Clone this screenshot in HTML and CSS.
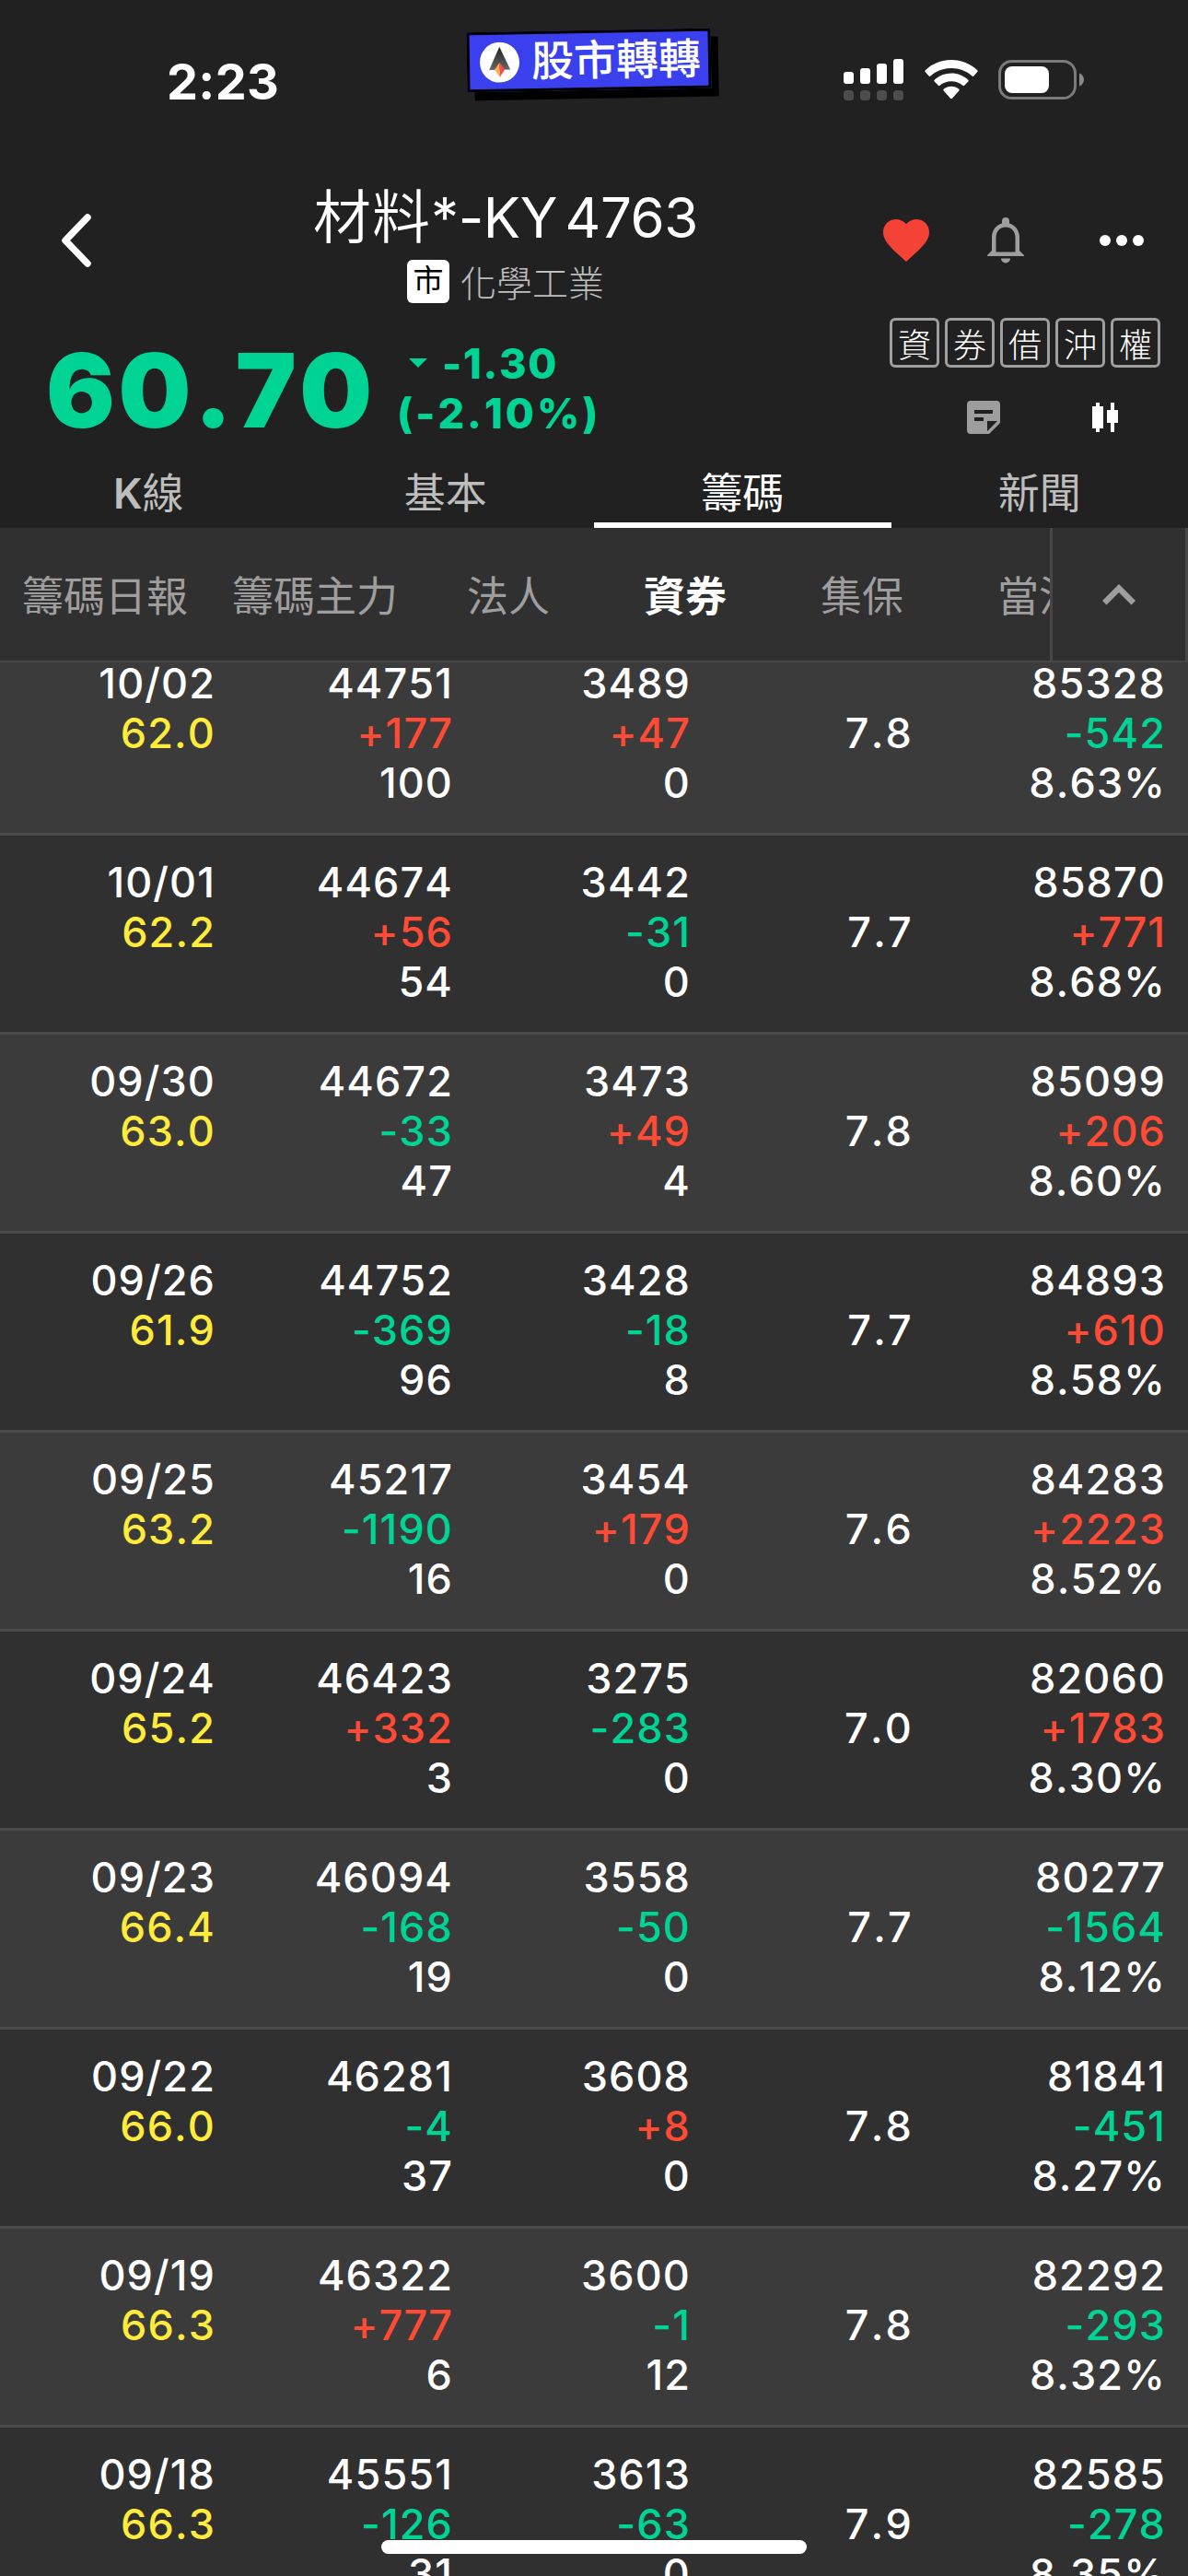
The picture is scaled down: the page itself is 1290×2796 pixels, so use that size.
FILE: index.html
```
<!DOCTYPE html>
<html lang="zh-Hant">
<head>
    <meta charset="UTF-8">
    <meta name="viewport" content="width=device-width, initial-scale=1.0">
    <title>材料*-KY 4763</title>
    <link rel="stylesheet" href="styles.css">
</head>
<body>
    <div class="screen">
        <div class="status-bar">
            <span class="clock">2:23</span>
            <div class="status-icons">
                <svg width="66" height="46" viewBox="0 0 66 46" fill="#fff">
                    <rect x="0" y="15" width="11" height="13" rx="3"/>
                    <rect x="18" y="11" width="11" height="17" rx="3"/>
                    <rect x="36" y="6" width="11" height="22" rx="3"/>
                    <rect x="54" y="1" width="11" height="27" rx="3"/>
                    <g fill="#4d4d4d">
                        <rect x="0" y="35" width="11" height="11" rx="3.5"/>
                        <rect x="18" y="35" width="11" height="11" rx="3.5"/>
                        <rect x="36" y="35" width="11" height="11" rx="3.5"/>
                        <rect x="54" y="35" width="11" height="11" rx="3.5"/>
                    </g>
                </svg>
                <svg class="wifi" width="58" height="43" viewBox="0 0 58 43" fill="#fff">
                    <path d="M29 0C18 0 8 4.300 .7 11.300Q0 12.200 .7 13.100L4.600 17.500Q5.600 18.300 6.500 17.500C12.500 12 20.300 9 29 9S45.500 12 51.500 17.500Q52.400 18.300 53.400 17.500L57.300 13.100Q58 12.200 57.300 11.300C50 4.300 40 0 29 0Z"/>
                    <path d="M29 14.500C22 14.500 15.500 17.200 10.700 21.700Q9.900 22.600 10.700 23.500L14.800 27.800Q15.700 28.600 16.700 27.800C20 24.800 24.300 23.200 29 23.200S38 24.800 41.300 27.800Q42.300 28.600 43.200 27.800L47.300 23.500Q48.100 22.600 47.300 21.700C42.500 17.200 36 14.500 29 14.500Z"/>
                    <path d="M29 28.700C25.800 28.700 22.900 29.900 20.700 31.700Q19.800 32.600 20.700 33.600L28 41.700Q29 42.600 30 41.700L37.300 33.600Q38.200 32.600 37.300 31.700C35.100 29.900 32.200 28.700 29 28.700Z"/>
                </svg>
                <svg width="94" height="43" viewBox="0 0 94 43">
                    <rect x="1.500" y="1.500" width="82" height="40" rx="13" fill="none" stroke="#7b7b7b" stroke-width="3"/>
                    <rect x="7" y="7" width="48" height="29" rx="8" fill="#fff"/>
                    <path d="M88 14.500C91 15.500 93 18.300 93 21.500S91 27.500 88 28.500Z" fill="#8a8a8a"/>
                </svg>
            </div>
            <div class="app-badge">
                <svg width="43" height="44" viewBox="0 0 43 44">
                    <defs>
                        <linearGradient id="arrow" x1="0" y1="0" x2="0" y2="1">
                            <stop offset="0" stop-color="#222"/>
                            <stop offset="1" stop-color="#666"/>
                        </linearGradient>
                    </defs>
                    <ellipse cx="21.500" cy="22" rx="21.500" ry="22" fill="#fff"/>
                    <path d="M21.500 5L33 30H10Z" fill="url(#arrow)"/>
                    <path d="M21.500 22V38L16 30Z" fill="#ffb04d"/>
                    <path d="M21.500 22V38L27 30Z" fill="#f94b4b"/>
                </svg>
                <span>股市轉轉</span>
            </div>
        </div>

        <div class="nav">
            <svg class="back" width="34" height="58" viewBox="0 0 34 58" fill="none" stroke="#fff" stroke-width="7.500" stroke-linecap="round" stroke-linejoin="round">
                <path d="M29 4L5 29L29 54"/>
            </svg>
            <div class="title">
                <h1><span>材料</span>*-KY 4763</h1>
                <div class="industry"><span class="market">市</span><span>化學工業</span></div>
            </div>
            <div class="actions">
                <svg width="50" height="46" viewBox="0 0 50 46" fill="#f44336">
                    <path d="M25 46L21.400 42.700C8.500 31.200 0 23.500 0 14C0 6.300 6 0 13.800 0C18.100 0 22.300 2 25 5.200C27.700 2 31.900 0 36.200 0C44 0 50 6.300 50 14C50 23.500 41.500 31.200 28.600 42.700Z"/>
                </svg>
                <svg width="40" height="50" viewBox="0 0 40 50" fill="#9e9e9e">
                    <path fill-rule="evenodd" d="M20 0A4 4 0 0 0 16 4V6.500C9 8.500 5 14.500 5 22V36L0 41V42H40V41L35 36V22C35 14.500 31 8.500 24 6.500V4A4 4 0 0 0 20 0ZM20 10.500C26.500 10.500 30.500 15.500 30.500 22V37.500H9.500V22C9.500 15.500 13.500 10.500 20 10.500Z"/>
                    <path d="M15 44.500H25A5 5 0 0 1 15 44.500Z"/>
                </svg>
                <svg width="48" height="12" viewBox="0 0 48 12" fill="#fff">
                    <circle cx="6" cy="6" r="6"/><circle cx="24" cy="6" r="6"/><circle cx="42" cy="6" r="6"/>
                </svg>
            </div>
        </div>

        <div class="quote">
            <div class="price">60.70</div>
            <div class="change">
                <div><svg width="20" height="10" viewBox="0 0 20 10"><path d="M0 0H20L10 10Z" fill="#00d494"/></svg>-1.30</div>
                <div class="percent">(-2.10%)</div>
            </div>
            <div class="quote-side">
                <div class="tags">
                    <span>資</span><span>券</span><span>借</span><span>沖</span><span>權</span>
                </div>
                <div class="tools">
                    <svg width="36" height="36" viewBox="0 0 36 36">
                        <path fill="#9e9e9e" fill-rule="evenodd" d="M4 0H32Q36 0 36 4V24L24 36H4Q0 36 0 32V4Q0 0 4 0ZM8 10V14H28V10ZM8 18V22H18V18ZM22 22V33L33 22Z"/>
                    </svg>
                    <svg width="28" height="32" viewBox="0 0 28 32" fill="#fff">
                        <path d="M4 0H8V4H12V28H8V32H4V28H0V4H4Z"/>
                        <path d="M20 0H24V8H28V22H24V32H20V22H16V8H20Z"/>
                    </svg>
                </div>
            </div>
        </div>

        <div class="tabs">
            <div class="tab"><b>K</b>線</div>
            <div class="tab">基本</div>
            <div class="tab active">籌碼</div>
            <div class="tab">新聞</div>
        </div>

        <div class="sub-tabs">
            <div class="sub-list">
                <div class="sub">籌碼日報</div>
                <div class="sub">籌碼主力</div>
                <div class="sub">法人</div>
                <div class="sub active">資券</div>
                <div class="sub">集保</div>
                <div class="sub">當沖</div>
            </div>
            <div class="collapse">
                <svg width="36" height="23" viewBox="0 0 36 23" fill="#9e9e9e">
                    <path d="M18 0L36 18L31.500 22.500L18 9L4.500 22.500L0 18Z"/>
                </svg>
            </div>
        </div>

        <div class="list">
            <div class="rows" id="rows"></div>
        </div>
        <div class="home-indicator"></div>
    </div>
    <script>
        // date, close, margin (balance, change, offset), short (balance, change, offset), ratio, total (balance, change, percent)
        const rows = [
            ['10/02', '62.0', '44751', '+177', '100', '3489', '+47', '0', '7.8', '85328', '-542', '8.63%'],
            ['10/01', '62.2', '44674', '+56', '54', '3442', '-31', '0', '7.7', '85870', '+771', '8.68%'],
            ['09/30', '63.0', '44672', '-33', '47', '3473', '+49', '4', '7.8', '85099', '+206', '8.60%'],
            ['09/26', '61.9', '44752', '-369', '96', '3428', '-18', '8', '7.7', '84893', '+610', '8.58%'],
            ['09/25', '63.2', '45217', '-1190', '16', '3454', '+179', '0', '7.6', '84283', '+2223', '8.52%'],
            ['09/24', '65.2', '46423', '+332', '3', '3275', '-283', '0', '7.0', '82060', '+1783', '8.30%'],
            ['09/23', '66.4', '46094', '-168', '19', '3558', '-50', '0', '7.7', '80277', '-1564', '8.12%'],
            ['09/22', '66.0', '46281', '-4', '37', '3608', '+8', '0', '7.8', '81841', '-451', '8.27%'],
            ['09/19', '66.3', '46322', '+777', '6', '3600', '-1', '12', '7.8', '82292', '-293', '8.32%'],
            ['09/18', '66.3', '45551', '-126', '31', '3613', '-63', '0', '7.9', '82585', '-278', '8.35%']
        ];

        function cell(top, change, bottom) {
            const cls = change[0] === '+' ? 'up' : 'down';
            return `<div class="cell"><div>${top}</div><div class="${cls}">${change}</div><div>${bottom}</div></div>`;
        }

        document.getElementById('rows').innerHTML = rows.map(r => `
            <div class="row">
                <div class="cell"><div>${r[0]}</div><div class="close">${r[1]}</div></div>
                ${cell(r[2], r[3], r[4])}
                ${cell(r[5], r[6], r[7])}
                <div class="cell ratio"><div>${r[8]}</div></div>
                ${cell(r[9], r[10], r[11])}
            </div>`).join('');
    </script>
</body>
</html>
```
FILE: styles.css
```
* {
    box-sizing: border-box;
}
body {
    margin: 0;
    background-color: #212121;
    color: #fff;
    font-family: Inter, "Noto Sans CJK TC", sans-serif;
}
svg {
    display: block;
    flex: none;
}
.screen {
    position: relative;
    width: 1290px;
    height: 2796px;
    display: flex;
    flex-direction: column;
    overflow: hidden;
}

/* status bar */
.status-bar {
    height: 177px;
    padding: 59px 112px 0 181px;
    display: flex;
    justify-content: space-between;
    align-items: flex-start;
}
.clock {
    font-size: 54px;
    font-weight: 700;
    line-height: 60px;
    letter-spacing: 0.3px;
}
.status-icons {
    display: flex;
    align-items: flex-start;
    padding-top: 4px;
}
.status-icons .wifi {
    margin: 2px 22px 0;
}
.status-icons svg:last-child {
    margin-top: 2px;
}
.app-badge {
    position: absolute;
    left: 507px;
    top: 33px;
    width: 265px;
    height: 65px;
    padding-left: 11px;
    display: flex;
    align-items: center;
    gap: 13px;
    background-color: #3b40ef;
    border: 3px solid #000;
    box-shadow: 8px 9px 0 #000;
    transform: rotate(-1deg);
    font-size: 46px;
    font-weight: 500;
    line-height: 59px;
}

/* title and actions */
.nav {
    height: 168px;
    display: flex;
    position: relative;
    justify-content: space-between;
    align-items: center;
    padding: 0 48px 0 66px;
}
.title {
    position: absolute;
    left: 0;
    right: 192px;
    top: 18px;
    display: flex;
    flex-direction: column;
    align-items: center;
}
.title h1 {
    margin: 0;
    font-size: 60px;
    font-weight: 400;
    line-height: 80px;
    letter-spacing: -0.4px;
    word-spacing: -8px;
}
.title h1 span {
    font-size: 63px;
    font-weight: 350;
    letter-spacing: 1px;
}
.industry {
    display: flex;
    align-items: center;
    gap: 12px;
    height: 58px;
    color: #bdbdbd;
    font-size: 39px;
    font-weight: 300;
}
.market {
    width: 46px;
    height: 47px;
    line-height: 44px;
    border-radius: 6px;
    background-color: #fff;
    color: #000;
    font-size: 33px;
    font-weight: 400;
    text-align: center;
}
.actions {
    display: flex;
    align-items: center;
    gap: 63px;
}
.actions svg:last-child {
    margin-left: 19px;
}

/* price */
.quote {
    height: 156px;
    display: flex;
    padding-left: 50px;
}
.price {
    width: 381px;
    font-size: 111px;
    font-weight: 900;
    line-height: 158px;
    letter-spacing: 3.5px;
    font-kerning: none;
    color: #00d494;
}
.change {
    padding-top: 23px;
    color: #00d494;
    font-size: 45px;
    font-weight: 800;
    line-height: 54px;
    letter-spacing: 1.7px;
    font-kerning: none;
}
.change div {
    display: flex;
}
.change .percent {
    letter-spacing: 3px;
}
.change svg {
    margin: 21px 16px 0 13px;
}
.quote-side {
    margin-left: auto;
    padding-right: 30px;
}
.tags {
    display: flex;
    gap: 6px;
}
.tags span {
    width: 54px;
    height: 54px;
    border: 3px solid #9e9e9e;
    border-radius: 6px;
    font-size: 36px;
    font-weight: 300;
    line-height: 54px;
    text-align: center;
}
.tools {
    display: flex;
    justify-content: flex-end;
    align-items: center;
    gap: 100px;
    padding: 36px 46px 0 0;
}

/* main tabs */
.tabs {
    display: flex;
    height: 72px;
}
.tab {
    flex: 1;
    text-align: center;
    font-size: 45px;
    font-weight: 400;
    line-height: 70px;
    color: #bdbdbd;
}
.tab b {
    font-weight: 600;
}
.tab.active {
    color: #fff;
    border-bottom: 6px solid #fff;
}

/* secondary tabs */
.sub-tabs {
    display: flex;
    height: 144px;
    background-color: #303030;
}
.sub-list {
    display: flex;
    width: 1140px;
    overflow: hidden;
}
.sub {
    flex: none;
    min-width: 192px;
    padding: 0 24px;
    text-align: center;
    font-size: 45px;
    line-height: 149px;
    color: #9e9e9e;
}
.sub.active {
    color: #fff;
    font-weight: 700;
}
.collapse {
    flex: 1;
    display: flex;
    justify-content: center;
    align-items: center;
    border-left: 3px solid #474747;
    border-right: 3px solid #474747;
}

/* table */
.list {
    flex: 1;
    overflow: hidden;
    border-top: 2px solid #474747;
}
.rows {
    margin-top: -28px;
}
.row {
    display: flex;
    height: 216px;
    padding-top: 24px;
    border-bottom: 3px solid #4b4b4b;
    background-color: #303030;
}
.row:nth-child(odd) {
    background-color: #3b3b3b;
}
.cell {
    width: 258px;
    padding-right: 24px;
    text-align: right;
    font-size: 45px;
    font-weight: 500;
    line-height: 54px;
    letter-spacing: 1.1px;
    font-kerning: none;
}
.ratio {
    padding: 54px 40px 0 0;
    letter-spacing: 2.2px;
}
.close {
    color: #ffeb3b;
}
.up {
    color: #ff4b36;
}
.down {
    color: #00d494;
}

.home-indicator {
    position: absolute;
    left: 414px;
    top: 2757px;
    width: 462px;
    height: 15px;
    border-radius: 8px;
    background-color: #fff;
}
```
